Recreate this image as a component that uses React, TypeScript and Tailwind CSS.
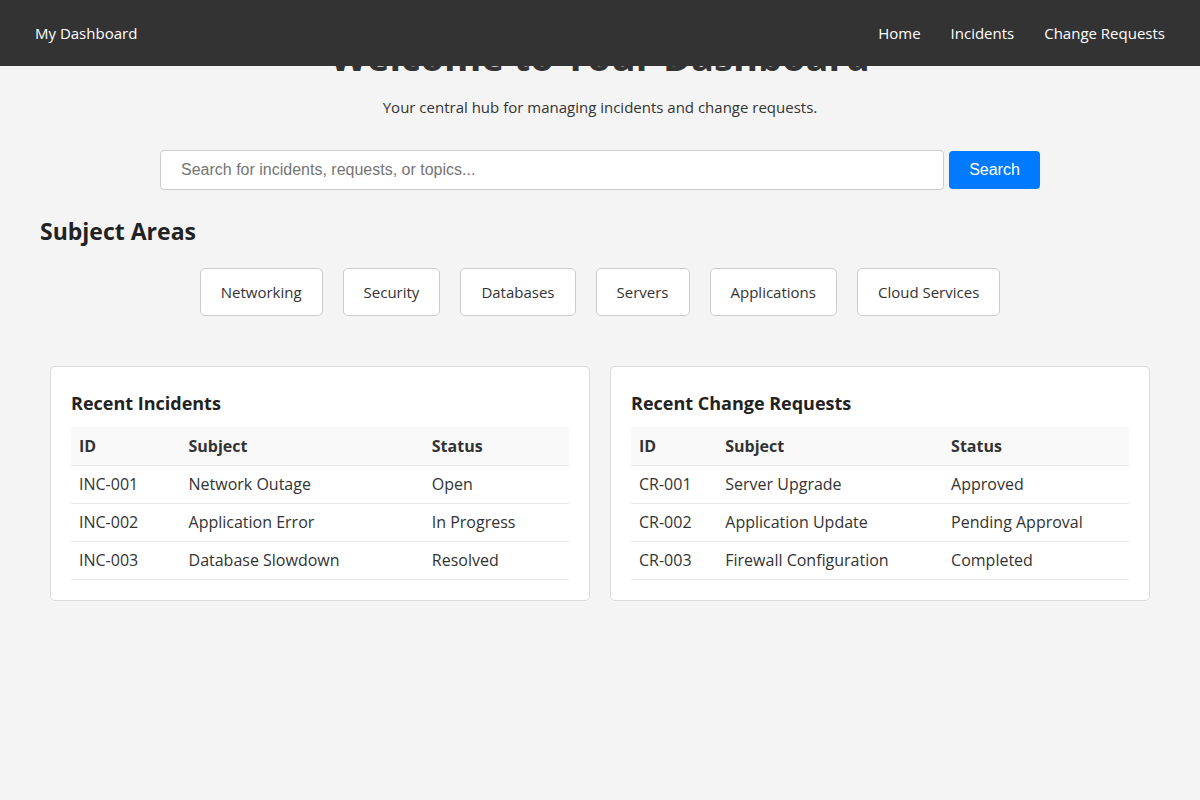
import React from "react";

const incidents = [
  ["INC-001", "Network Outage", "Open"],
  ["INC-002", "Application Error", "In Progress"],
  ["INC-003", "Database Slowdown", "Resolved"],
];
const changes = [
  ["CR-001", "Server Upgrade", "Approved"],
  ["CR-002", "Application Update", "Pending Approval"],
  ["CR-003", "Firewall Configuration", "Completed"],
];
const areas = ["Networking", "Security", "Databases", "Servers", "Applications", "Cloud Services"];

function Card({ title, rows }: { title: string; rows: string[][] }) {
  return (
    <div className="flex-1 bg-white border border-[#dcdcdc] rounded-[5px] px-[20px] pt-[23px] pb-[20px]">
      <h2 className="text-[18px] font-bold leading-[26px] mb-[11px] text-[#222]">{title}</h2>
      <table className="w-full border-collapse text-[16px]">
        <thead>
          <tr className="bg-[#f9f9f9]">
            <th className="text-left font-bold px-[8px] h-[38px] border-b border-[#e8e8e8]">ID</th>
            <th className="text-left font-bold px-[8px] h-[38px] border-b border-[#e8e8e8]">Subject</th>
            <th className="text-left font-bold px-[8px] h-[38px] border-b border-[#e8e8e8]">Status</th>
          </tr>
        </thead>
        <tbody>
          {rows.map((r) => (
            <tr key={r[0]}>
              {r.map((c, i) => (
                <td key={i} className="px-[8px] h-[38px] border-b border-[#e8e8e8]">
                  {c}
                </td>
              ))}
            </tr>
          ))}
        </tbody>
      </table>
    </div>
  );
}

export default function App() {
  return (
    <div
      className="min-h-[800px] bg-[#f4f4f4] text-[#333]"
      style={{ fontFamily: '"Open Sans", "Noto Sans", sans-serif' }}
    >
      <header className="fixed top-0 left-0 right-0 h-[66px] bg-[#333] text-white flex items-center justify-between px-[35px] z-10">
        <div className="text-[15px]">My Dashboard</div>
        <nav className="flex gap-[30px] text-[15px]">
          <span>Home</span>
          <span>Incidents</span>
          <span>Change Requests</span>
        </nav>
      </header>
      <main className="px-[40px] pt-[34px]">
        <h1 className="text-[38px] font-bold text-center leading-[44px] text-[#333]">
          Welcome to Your Dashboard
        </h1>
        <p className="text-center text-[15px] mt-[18px] leading-[22px]">
          Your central hub for managing incidents and change requests.
        </p>
        <div className="flex justify-center items-center gap-[5px] mt-[32px]">
          <input
            className="w-[784px] h-[40px] bg-white border border-[#ccc] rounded-[4px] px-[20px] text-[16px] placeholder:text-[#757575] outline-none"
            style={{ fontFamily: '"Liberation Sans", Arial, sans-serif' }}
            placeholder="Search for incidents, requests, or topics..."
          />
          <button
            className="w-[91px] h-[38px] bg-[#007bff] text-white rounded-[4px] text-[16px]"
            style={{ fontFamily: '"Liberation Sans", Arial, sans-serif' }}
          >
            Search
          </button>
        </div>
        <h2 className="text-[23px] font-bold mt-[25px] leading-[32px] text-[#222]">Subject Areas</h2>
        <div className="flex justify-center gap-[20px] mt-[21px]">
          {areas.map((a) => (
            <div
              key={a}
              className="h-[48px] px-[20px] flex items-center bg-white border border-[#ccc] rounded-[5px] text-[15px]"
            >
              {a}
            </div>
          ))}
        </div>
        <div className="max-w-[1100px] mx-auto flex gap-[20px] mt-[50px]">
          <Card title="Recent Incidents" rows={incidents} />
          <Card title="Recent Change Requests" rows={changes} />
        </div>
      </main>
    </div>
  );
}
